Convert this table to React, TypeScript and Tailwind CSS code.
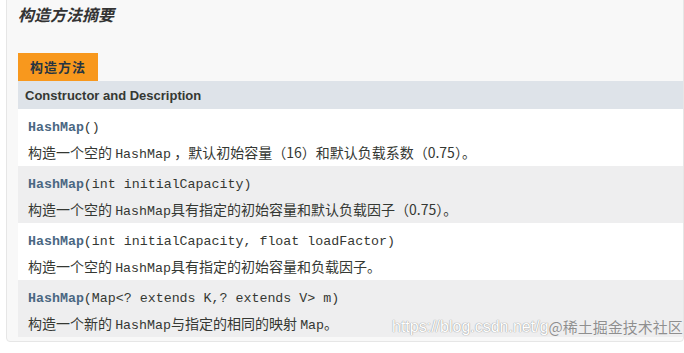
import React from "react";

const cjk = { fontFamily: '"Microsoft YaHei","Noto Sans CJK SC","Noto Sans",sans-serif' };
const mono = { fontFamily: '"Liberation Mono","Courier New",monospace' };

function Code({ children }: { children: React.ReactNode }) {
  return (
    <span className="text-[13.3px] leading-none text-[#353833]" style={mono}>
      {children}
    </span>
  );
}

function Link() {
  return <span className="font-bold text-[#4a6782]">HashMap</span>;
}

function Row({ alt, code, desc }: { alt: boolean; code: React.ReactNode; desc: React.ReactNode }) {
  return (
    <div className={`${alt ? "bg-[#eeeeef]" : "bg-white"} h-[57px] pl-[10px] pt-[10px] overflow-hidden`}>
      <div className="h-[18px] flex items-center whitespace-pre">
        <Code>
          <Link />
          {code}
        </Code>
      </div>
      <div
        className="mt-[5px] h-[22px] flex items-center text-[14px] text-[#353833] whitespace-pre"
        style={cjk}
      >
        <span className="leading-none">{desc}</span>
      </div>
    </div>
  );
}

export default function App() {
  return (
    <div className="relative w-[684px] h-[353px] overflow-hidden bg-white">
      <div className="ml-[6px] -mt-[4px] h-[346px] bg-[#f8f8f8] border border-[#e6e6e6] rounded-[4px] pl-[11px] overflow-hidden">
        <div className="pt-[6px] h-[56px]">
          <div className="text-[16px] font-bold italic leading-[22px] text-[#333]" style={cjk}>
            构造方法摘要
          </div>
        </div>
        <div className="flex">
          <div
            className="w-[80px] h-[28px] bg-[#f8981d] text-[#253441] text-[13px] font-bold flex items-center justify-center"
            style={cjk}
          >
            <span className="tracking-[1px]">构造方法</span>
          </div>
        </div>
        <div
          className="h-[28px] bg-[#dee3e9] flex items-center pl-[7px] pt-[2px] text-[13px] font-bold text-[#353833]"
          style={{ fontFamily: '"Liberation Sans",Arial,sans-serif' }}
        >
          Constructor and Description
        </div>
        <Row
          alt={false}
          code="()"
          desc={
            <>
              构造一个空的 <Code>HashMap</Code> ，默认初始容量（16）和默认负载系数（0.75）。
            </>
          }
        />
        <Row
          alt={true}
          code="(int initialCapacity)"
          desc={
            <>
              构造一个空的 <Code>HashMap</Code>具有指定的初始容量和默认负载因子（0.75）。
            </>
          }
        />
        <Row
          alt={false}
          code="(int initialCapacity, float loadFactor)"
          desc={
            <>
              构造一个空的 <Code>HashMap</Code>具有指定的初始容量和负载因子。
            </>
          }
        />
        <Row
          alt={true}
          code="(Map<? extends K,? extends V> m)"
          desc={
            <>
              构造一个新的 <Code>HashMap</Code>与指定的相同的映射 <Code>Map</Code>。
            </>
          }
        />
      </div>
      <div className="absolute left-[392px] top-[316px] flex items-center leading-[22px]">
        <span
          className="text-[16px] text-white"
          style={{
            fontFamily: '"Liberation Sans",Arial,sans-serif',
            textShadow: "0 0 1px #9a9a9a, 0 0 1px #9a9a9a",
          }}
        >
          https://blog.csdn.net/g
        </span>
        <span
          className="text-[15px] text-[#8f8f8f]"
          style={{ ...cjk, textShadow: "0 0 1px #ffffff" }}
        >
          @稀土掘金技术社区
        </span>
      </div>
    </div>
  );
}
